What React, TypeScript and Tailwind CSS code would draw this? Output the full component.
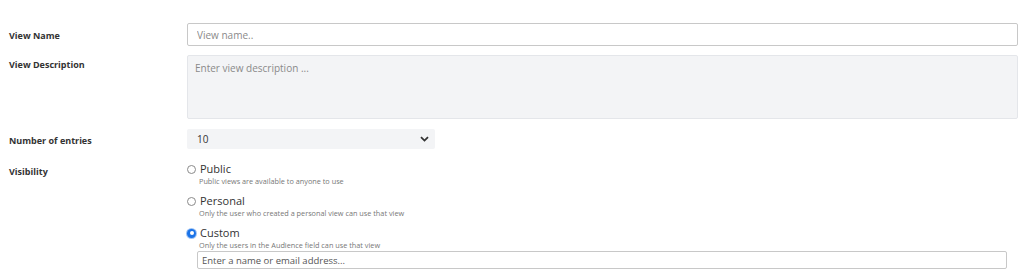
import { useState } from "react";

const options = [
  { id: "public", label: "Public", hint: "Public views are available to anyone to use" },
  { id: "personal", label: "Personal", hint: "Only the user who created a personal view can use that view" },
  { id: "custom", label: "Custom", hint: "Only the users in the Audience field can use that view" },
];

function Radio({ checked }: { checked: boolean }) {
  if (checked) {
    return (
      <span className="flex h-[9px] w-[9px] items-center justify-center rounded-full bg-[#1a73e8] ring-1 ring-[#9ec3f5]">
        <span className="h-[4px] w-[4px] rounded-full bg-white" />
      </span>
    );
  }
  return <span className="h-[9px] w-[9px] rounded-full border border-[#8a8a8a] bg-white" />;
}

export default function App() {
  const [visibility, setVisibility] = useState("custom");

  return (
    <div className="h-[277px] w-full bg-white font-['Open_Sans',sans-serif] text-[#333]">
      <div className="flex flex-col pt-[23px] pr-[6px]">
        <div className="flex">
          <label className="w-[187px] pl-[9px] pt-[6px] text-[9px] font-bold">View Name</label>
          <input
            className="h-[23px] flex-1 rounded-[2px] border border-[#c8c8c8] px-[9px] text-[10px] outline-none placeholder:text-[#8a8a8a]"
            placeholder="View name.."
          />
        </div>

        <div className="mt-[9px] flex">
          <label className="w-[187px] pl-[9px] pt-[3px] text-[9px] font-bold">View Description</label>
          <textarea
            className="h-[64px] flex-1 resize-none rounded-[2px] border border-[#e4e6ea] bg-[#f3f4f6] px-[7px] py-[5px] text-[10px] outline-none placeholder:text-[#8a8a8a]"
            placeholder="Enter view description ..."
          />
        </div>

        <div className="mt-[10px] flex">
          <label className="w-[187px] pl-[9px] pt-[5px] text-[9px] font-bold">Number of entries</label>
          <div className="flex h-[20px] w-[248px] items-center justify-between rounded-[2px] bg-[#f3f4f6] pl-[10px] pr-[6px] text-[10px]">
            <span>10</span>
            <svg width="9" height="6" viewBox="0 0 9 6">
              <path d="M1 1.2 L4.5 4.6 L8 1.2" fill="none" stroke="#333" strokeWidth="1.8" />
            </svg>
          </div>
        </div>

        <div className="mt-[13px] flex">
          <label className="w-[187px] pl-[9px] pt-[3px] text-[9px] font-bold">Visibility</label>
          <div className="flex flex-1 flex-col">
            {options.map((o, i) => (
              <div key={o.id} className={i > 0 ? "mt-[8px]" : ""}>
                <button
                  type="button"
                  onClick={() => setVisibility(o.id)}
                  className="flex items-center gap-[4px]"
                >
                  <Radio checked={visibility === o.id} />
                  <span className="text-[11px] leading-[14px] font-medium text-[#333]">{o.label}</span>
                </button>
                <div className="pl-[12px] text-[7.3px] leading-[10px] text-[#777]">{o.hint}</div>
              </div>
            ))}
            <div className="ml-[10px] mr-[11px] mt-[1px]">
              <input
                className="block h-[18px] w-full rounded-[2px] border border-[#c8c8c8] px-[4px] text-[9.5px] outline-none placeholder:text-[#555]"
                placeholder="Enter a name or email address..."
              />
            </div>
          </div>
        </div>
      </div>
    </div>
  );
}
